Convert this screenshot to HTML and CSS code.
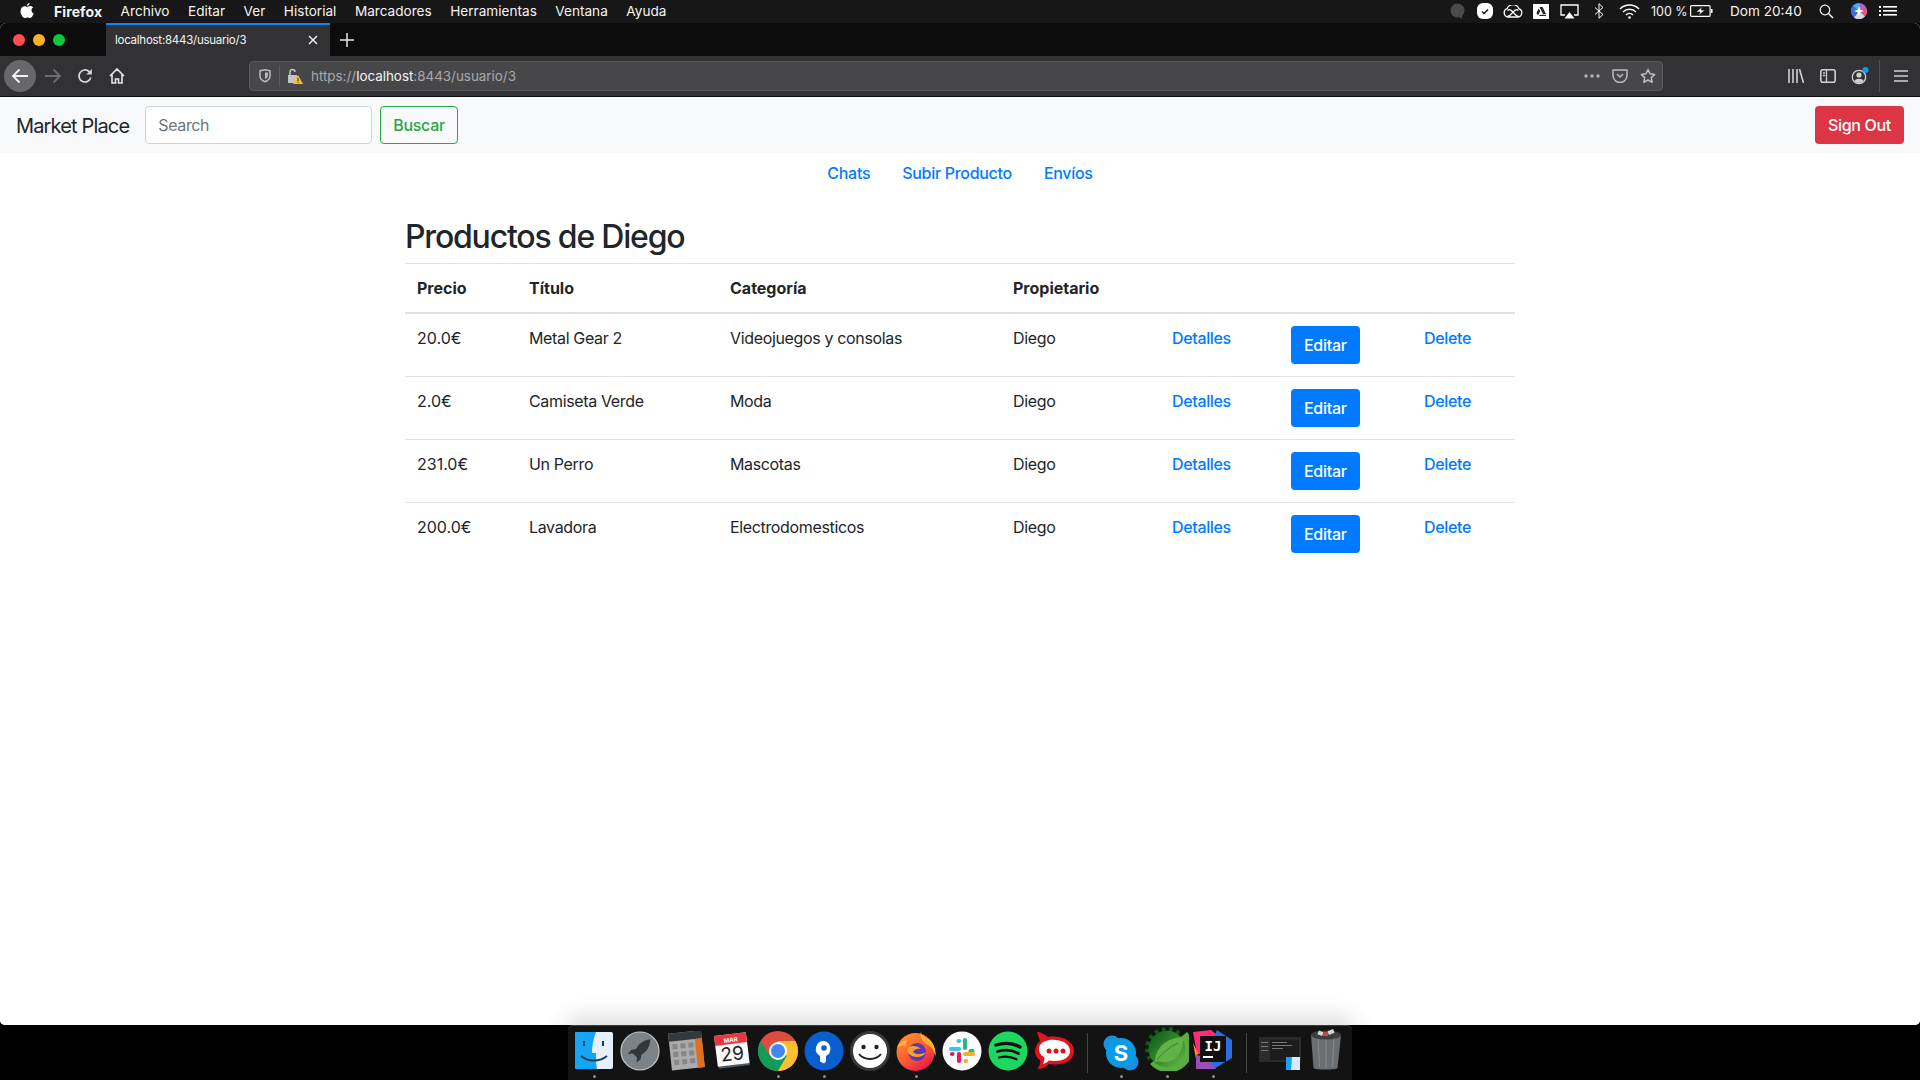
FILE: index.html
```html
<!DOCTYPE html>
<html lang="es">
<head>
<meta charset="utf-8">
<title>Market Place</title>
<link rel="stylesheet" href="styles.css">
</head>
<body>
<header class="menubar">
  <svg class="apple" viewBox="0 0 14 16" width="14" height="16"><path fill="#fff" d="M9.6 0c.1 1.2-1.100 2.900-2.700 2.800C6.700 1.400 8.100.1 9.600 0zM7 3.800c.7 0 1.700-.9 3.100-.9.900 0 2.200.4 3 1.600-2.400 1.400-2 4.900.6 5.900-.6 1.700-2.100 4.600-3.600 4.600-.9 0-1.300-.6-2.500-.6s-1.700.6-2.500.6C3.300 15 .5 11.700.5 8.400c0-3.200 2-5.100 4-5.100 1.100 0 2 .5 2.500.5z"/></svg>
  <nav class="menu">
    <span class="menu-app">Firefox</span>
    <span>Archivo</span><span>Editar</span><span>Ver</span><span>Historial</span><span>Marcadores</span><span>Herramientas</span><span>Ventana</span><span>Ayuda</span>
  </nav>
  <div class="status">
    <span class="si"><svg width="15" height="17" viewBox="0 0 15 17"><circle cx="7.500" cy="7.500" r="7" fill="#4a4a4c"/><path d="M8 13l4 3v-5z" fill="#4a4a4c"/></svg></span>
    <span class="si"><svg width="16" height="16" viewBox="0 0 16 16"><rect x="0" y="0" width="16" height="16" rx="6" fill="#fff"/><path d="M5 8.500l2 2 4-4" fill="none" stroke="#222" stroke-width="1.600"/></svg></span>
    <span class="si"><svg width="20" height="13" viewBox="0 0 20 13"><g fill="none" stroke="#fff" stroke-width="1.300"><path d="M5 12a4.300 4.300 0 0 1-1-8.300 6.500 6.500 0 0 1 12 0 4.300 4.300 0 0 1-1 8.300z"/><path d="M4.500 11.500c4-.5 6-6.800 9-6.800a3 3 0 0 1 2 .8M15.500 11.500c-4-.5-6-6.800-9-6.800a3 3 0 0 0-2 .8"/></g></svg></span>
    <span class="si"><svg width="16" height="15" viewBox="0 0 16 15"><rect width="16" height="15" fill="#fff"/><path d="M6.500 3h3l3.500 7H10zM5.700 4.500L7.200 7.300 5 11.500 3.500 9zM6 12h6.500l1-1.200H7z" fill="#222"/></svg></span>
    <span class="si"><svg width="19" height="15" viewBox="0 0 19 15"><path d="M5 11H1V1h17v10h-4" fill="none" stroke="#fff" stroke-width="1.300"/><path d="M9.500 8l5 6.500h-10z" fill="#fff"/></svg></span>
    <span class="si si-w"><svg width="10" height="16" viewBox="0 0 10 16"><path d="M1 4.500l8 7-4 3.800V.7l4 3.800-8 7" fill="none" stroke="#fff" stroke-width="1"/></svg></span>
    <span class="si si-w"><svg width="21" height="15" viewBox="0 0 21 15"><g fill="none" stroke="#fff" stroke-width="1.500"><path d="M1 5a13.500 13.500 0 0 1 19 0"/><path d="M4 8a9.200 9.200 0 0 1 13 0"/><path d="M7 11a5 5 0 0 1 7 0"/></g><circle cx="10.500" cy="13.500" r="1.300" fill="#fff"/></svg></span>
    <span class="batt-text">100 %</span>
    <svg class="batt" width="23" height="12" viewBox="0 0 23 12"><rect x=".6" y=".6" width="19.500" height="10.800" rx="1" fill="none" stroke="#fff" stroke-width="1.200"/><rect x="21" y="4" width="1.500" height="4" fill="#fff"/><path d="M13 1L6 7h4l-2 4 7-6h-4z" fill="#fff" stroke="#171717" stroke-width=".7"/></svg>
    <span class="clock">Dom 20:40</span>
    <span class="si si-search"><svg width="15" height="15" viewBox="0 0 15 15"><circle cx="6" cy="6" r="4.800" fill="none" stroke="#fff" stroke-width="1.200"/><path d="M9.500 9.500l4.500 4.500" stroke="#fff" stroke-width="1.400"/></svg></span>
    <span class="si si-siri"><svg width="16" height="16" viewBox="0 0 16 16"><circle cx="8" cy="8" r="7.800" fill="#8a8fa8"/><path d="M8 8L2 2.500a8 8 0 0 1 6-2.300z" fill="#38b6e8"/><path d="M8 8V.2a8 8 0 0 1 6.500 3.500z" fill="#c05ad8"/><path d="M8 8l6.500-4.300A8 8 0 0 1 14 13.500z" fill="#e0557c"/><path d="M8 8l6 5.500A8 8 0 0 1 3 14.500z" fill="#d8d8e4"/><path d="M8 8l-5 6.500A8 8 0 0 1 2 2.500z" fill="#3a6fd8"/><path d="M8 3l1.300 3.700 3.700 1.300-3.700 1.300L8 13 6.700 9.300 3 8l3.700-1.300z" fill="#fff"/></svg></span>
    <span class="si"><svg width="18" height="12" viewBox="0 0 18 12"><g fill="#fff"><rect x="0" y="1" width="2" height="2"/><rect x="0" y="5" width="2" height="2"/><rect x="0" y="9" width="2" height="2"/><rect x="4" y="1" width="14" height="1.600"/><rect x="4" y="5" width="14" height="1.600"/><rect x="4" y="9" width="14" height="1.600"/></g></svg></span>
  </div>
</header>

<div class="window">
  <div class="tabstrip">
    <div class="traffic"><i class="dot dot-r"></i><i class="dot dot-y"></i><i class="dot dot-g"></i></div>
    <div class="tab">
      <span class="tab-title">localhost:8443/usuario/3</span>
      <svg width="12" height="12" viewBox="0 0 12 12"><path d="M2 2l8 8M10 2l-8 8" stroke="#f2f2f2" stroke-width="1.400"/></svg>
    </div>
    <svg class="newtab" width="14" height="14" viewBox="0 0 14 14"><path d="M7 0v14M0 7h14" stroke="#e8e8e8" stroke-width="1.500"/></svg>
  </div>

  <div class="toolbar">
    <span class="tb tb-back"><svg width="18" height="16" viewBox="0 0 18 16"><path d="M17 8H2M8.500 1.500L2 8l6.500 6.500" fill="none" stroke="#f2f2f2" stroke-width="1.800"/></svg></span>
    <span class="tb"><svg width="18" height="16" viewBox="0 0 18 16"><path d="M1 8h15M9.500 1.500L16 8l-6.500 6.500" fill="none" stroke="#6e6e70" stroke-width="1.800"/></svg></span>
    <span class="tb"><svg width="16" height="16" viewBox="0 0 16 16"><path d="M13.800 9.500A6 6 0 1 1 12 3.500L14 5.500" fill="none" stroke="#d8d8d8" stroke-width="1.700"/><path d="M14.800 1v5.500H9.300z" fill="#d8d8d8"/></svg></span>
    <span class="tb"><svg width="16" height="16" viewBox="0 0 16 16"><path d="M1 8l7-7 7 7M3 6.500V15h3.500v-4h3v4H13V6.500" fill="none" stroke="#e8e8e8" stroke-width="1.600"/></svg></span>
    <div class="urlbar">
      <svg class="shield" width="12" height="14" viewBox="0 0 12 14"><path d="M1 1.800L6 .8l5 1v5c0 3-2.300 5-5 6-2.700-1-5-3-5-6z" fill="none" stroke="#bdbdbd" stroke-width="1.500"/><path d="M6 3.500h2.800v3.300c0 1.500-1.300 2.700-2.800 3.300z" fill="#bdbdbd"/></svg>
      <i class="url-sep"></i>
      <svg class="lock" width="16" height="16" viewBox="0 0 16 16"><path d="M1 7h9v8H1z" fill="#c4c4c4"/><path d="M3 7V4a2.500 2.500 0 0 1 5 0" fill="none" stroke="#c4c4c4" stroke-width="1.500"/><path d="M11 7l5 9H6z" fill="#fbbf24"/><rect x="10.500" y="10" width="1" height="3" fill="#222"/><rect x="10.500" y="13.700" width="1" height="1" fill="#222"/></svg>
      <span class="url"><span class="url-dim">https://</span>localhost<span class="url-dim">:8443/usuario/3</span></span>
      <span class="url-actions">
        <svg width="16" height="4" viewBox="0 0 16 4"><g fill="#b4b4b4"><circle cx="2" cy="2" r="1.700"/><circle cx="8" cy="2" r="1.700"/><circle cx="14" cy="2" r="1.700"/></g></svg>
        <svg width="16" height="14" viewBox="0 0 16 14"><path d="M1 1h14v5.500a7 7 0 0 1-14 0z" fill="none" stroke="#bdbdbd" stroke-width="1.500"/><path d="M5 5l3 3 3-3" fill="none" stroke="#bdbdbd" stroke-width="1.500"/></svg>
        <svg width="16" height="16" viewBox="0 0 16 16"><path d="M8 1.500l2 4.300 4.700.6-3.400 3.200.9 4.700L8 12l-4.200 2.300.9-4.700L1.300 6.400 6 5.800z" fill="none" stroke="#bdbdbd" stroke-width="1.500" stroke-linejoin="round"/></svg>
      </span>
    </div>
    <div class="tb-right">
      <span class="tb"><svg width="16" height="14" viewBox="0 0 16 14"><path d="M1 0v14M5 0v14M9 0v14M11.500 0L15.500 14" stroke="#d0d0d0" stroke-width="1.600" fill="none"/></svg></span>
      <span class="tb"><svg width="16" height="14" viewBox="0 0 16 14"><rect x=".8" y=".8" width="14.400" height="12.400" rx="2" fill="none" stroke="#d0d0d0" stroke-width="1.600"/><path d="M6.500 1v12M3 4h2M3 6.500h2" stroke="#d0d0d0" stroke-width="1.300"/></svg></span>
      <span class="tb"><svg width="18" height="18" viewBox="0 0 18 18"><circle cx="8" cy="10" r="6.700" fill="none" stroke="#d0d0d0" stroke-width="1.300"/><circle cx="8" cy="8" r="2.600" fill="#d0d0d0"/><path d="M3.500 14c1-3 8-3 9 0a6 6 0 0 1-9 0z" fill="#d0d0d0"/><circle cx="14.500" cy="3" r="3" fill="#0a9ee8"/></svg></span>
      <i class="tb-sep"></i>
      <span class="tb"><svg width="14" height="12" viewBox="0 0 14 12"><path d="M0 1h14M0 6h14M0 11h14" stroke="#d0d0d0" stroke-width="1.600"/></svg></span>
    </div>
  </div>

  <main class="page">
    <div class="navbar">
      <span class="brand">Market Place</span>
      <form class="search">
        <input class="search-input" type="text" placeholder="Search">
        <button class="btn btn-outline" type="button">Buscar</button>
      </form>
      <button class="btn btn-danger" type="button">Sign Out</button>
    </div>
    <nav class="links">
      <a class="link" href="#">Chats</a>
      <a class="link" href="#">Subir Producto</a>
      <a class="link" href="#">Envíos</a>
    </nav>
    <section class="container">
      <h2 class="title">Productos de Diego</h2>
      <table class="table">
        <colgroup>
          <col class="c1"><col class="c2"><col class="c3"><col class="c4"><col class="c5"><col class="c6"><col class="c7">
        </colgroup>
        <thead>
          <tr><th>Precio</th><th>Título</th><th>Categoría</th><th>Propietario</th><th></th><th></th><th></th></tr>
        </thead>
        <tbody>
          <tr><td class="price">20.0€</td><td>Metal Gear 2</td><td>Videojuegos y consolas</td><td>Diego</td><td><a class="cell-link" href="#">Detalles</a></td><td><button class="btn btn-primary" type="button">Editar</button></td><td><a class="cell-link" href="#">Delete</a></td></tr>
          <tr><td class="price">2.0€</td><td>Camiseta Verde</td><td>Moda</td><td>Diego</td><td><a class="cell-link" href="#">Detalles</a></td><td><button class="btn btn-primary" type="button">Editar</button></td><td><a class="cell-link" href="#">Delete</a></td></tr>
          <tr><td class="price">231.0€</td><td>Un Perro</td><td>Mascotas</td><td>Diego</td><td><a class="cell-link" href="#">Detalles</a></td><td><button class="btn btn-primary" type="button">Editar</button></td><td><a class="cell-link" href="#">Delete</a></td></tr>
          <tr><td class="price">200.0€</td><td>Lavadora</td><td>Electrodomesticos</td><td>Diego</td><td><a class="cell-link" href="#">Detalles</a></td><td><button class="btn btn-primary" type="button">Editar</button></td><td><a class="cell-link" href="#">Delete</a></td></tr>
        </tbody>
      </table>
    </section>
  </main>
</div>

<footer class="dockrow">
  <div class="dock">
    <div class="app"><svg width="40" height="40" viewBox="0 0 40 40"><rect x="1" y="1" width="38" height="37" rx="2" fill="#e6f0fa"/><path d="M3 1h19c-3 8-4 14-4 21h4c0 6 0 11 1 16H3a2 2 0 0 1-2-2V3a2 2 0 0 1 2-2z" fill="#15a6f3"/><path d="M10 10v5M29 10v5" stroke="#1c3a5e" stroke-width="2"/><path d="M7 25c7 6 19 6 26 0" fill="none" stroke="#1c3a5e" stroke-width="1.800"/></svg><i class="pip"></i></div>
    <div class="app"><svg width="40" height="40" viewBox="0 0 40 40"><circle cx="20" cy="20" r="19" fill="#7d8286" stroke="#c2c5c7" stroke-width="1.200"/><path d="M31 8c-7 1-12 4-15 10l-5 1-3 4 5-.5 4 4-.5 5 4-3 1-5c6-3 8-8 9-15.500z" fill="#34363a"/></svg><i class="pip pip-off"></i></div>
    <div class="app"><svg width="40" height="40" viewBox="0 0 40 40"><g transform="rotate(-6 20 20)"><rect x="4" y="1" width="33" height="37" fill="#ababab"/><rect x="4" y="1" width="33" height="8" fill="#34393c"/><rect x="30" y="9" width="7" height="29" fill="#e07020"/><g fill="#868686"><rect x="7" y="12" width="5" height="5"/><rect x="15" y="12" width="5" height="5"/><rect x="23" y="12" width="5" height="5"/><rect x="7" y="20" width="5" height="5"/><rect x="15" y="20" width="5" height="5"/><rect x="23" y="20" width="5" height="5"/><rect x="7" y="28" width="5" height="5"/><rect x="15" y="28" width="5" height="5"/><rect x="23" y="28" width="5" height="5"/></g></g></svg><i class="pip pip-off"></i></div>
    <div class="app"><svg width="40" height="40" viewBox="0 0 40 40"><g transform="rotate(-7 20 20)"><rect x="5" y="7" width="31" height="29" fill="#4d5a5e"/><rect x="4" y="3" width="32" height="31" fill="#fafafa"/><rect x="4" y="3" width="32" height="10" fill="#e8383d"/><text x="20" y="11" text-anchor="middle" class="cal-mon">MAR</text><text x="20" y="29.500" text-anchor="middle" class="cal-day">29</text></g></svg><i class="pip pip-off"></i></div>
    <div class="app"><svg width="40" height="40" viewBox="0 0 40 40"><circle cx="20" cy="20" r="20" fill="#dd4c3d"/><path d="M20 40A20 20 0 0 0 37.300 10H20z" fill="#fbc02d"/><path d="M2.700 10A20 20 0 0 0 20 40l9-15.500H11.500z" fill="#0f9d58"/><circle cx="20" cy="20" r="9" fill="#fff"/><circle cx="20" cy="20" r="7" fill="#4285f4"/></svg><i class="pip"></i></div>
    <div class="app"><svg width="40" height="40" viewBox="0 0 40 40"><circle cx="20" cy="20" r="19.500" fill="#0a5fd0"/><path d="M20 10a8 8 0 0 0-4 15v5.500l4 2 2-2V25a8 8 0 0 0-2-15z" fill="#fff"/><circle cx="20" cy="17" r="2.800" fill="#0a5fd0"/></svg><i class="pip"></i></div>
    <div class="app"><svg width="40" height="40" viewBox="0 0 40 40"><circle cx="20" cy="20" r="18.500" fill="#fff" stroke="#38383a" stroke-width="3"/><circle cx="13.500" cy="16" r="2.200" fill="#222"/><circle cx="26.500" cy="16" r="2.200" fill="#222"/><path d="M9 23c5 6.500 17 6.500 22 0" fill="none" stroke="#222" stroke-width="2"/></svg><i class="pip pip-off"></i></div>
    <div class="app"><svg width="40" height="40" viewBox="0 0 40 40"><defs><linearGradient id="ff" x1="0" y1="0" x2=".7" y2="1"><stop offset="0" stop-color="#ff9a2e"/><stop offset=".6" stop-color="#ff5a30"/><stop offset="1" stop-color="#e8184f"/></linearGradient></defs><circle cx="19.500" cy="21" r="19" fill="url(#ff)"/><path d="M25 0c0 5 3 6 7 8 5 3 8 9 7.500 17-1-6-5-10-9-12-4-3-7-7-5.500-13z" fill="#ffc83a"/><path d="M27 3c1 4 5 6 8 9 3 3 4.500 8 4.500 13-2-7-6-11-9-13-3-2-4-5-3.500-9z" fill="#ffa62e"/><path d="M1 17c2-5 6-8 11-8-2 2-3 4-2 6-4-1-7 0-9 2z" fill="#ffb13a"/><circle cx="21" cy="21" r="9" fill="#5a38b8"/><path d="M13 16c4-2 9-1 12 2-4-1-6 0-8 3 3 3 8 3 13 0-3 6-13 7-18 1-1-2-1-4 1-6z" fill="#ff9f2e"/></svg><i class="pip"></i></div>
    <div class="app"><svg width="40" height="40" viewBox="0 0 40 40"><circle cx="20" cy="20" r="19.500" fill="#fff"/><g stroke-width="4.200" stroke-linecap="round"><path d="M23 9v8M28.500 20h2" stroke="#2eb67d"/><path d="M16.500 10h.5M9 18h8" stroke="#36c5f0"/><path d="M17 23v7M10 23h.5" stroke="#e01e5a"/><path d="M23.500 30h.5M23 23h8" stroke="#ecb22e"/></g></svg><i class="pip pip-off"></i></div>
    <div class="app"><svg width="40" height="40" viewBox="0 0 40 40"><circle cx="20" cy="20" r="19.500" fill="#1ed760"/><g fill="none" stroke="#111" stroke-linecap="round"><path d="M8 14c8-2.500 17-2 24 2" stroke-width="3.400"/><path d="M9.500 20.500c7-2 15-1.500 21 2" stroke-width="2.800"/><path d="M11 26.500c6-1.500 12-1 17.500 1.800" stroke-width="2.300"/></g></svg><i class="pip pip-off"></i></div>
    <div class="app"><svg width="42" height="40" viewBox="0 0 42 40"><path d="M4 1c3 0 8 2 11 5 12-2 26 3 26 14 0 11-14 15-25 13-3 3-8 5-12 5 2-2 4-6 3-9C1 26 0 16 7 10 6 7 5 4 4 1z" fill="#e4111f"/><path d="M16 9c9-1.500 21 2 21 11 0 9-12 11-21 9.500-2 2-4 3-6 3.500 1-2 2-5 1-7-6-3-7-11-1-15z" fill="#fff"/><circle cx="16" cy="20" r="2.500" fill="#e4111f"/><circle cx="23" cy="20" r="2.500" fill="#e4111f"/><circle cx="30" cy="20" r="2.500" fill="#e4111f"/></svg><i class="pip pip-off"></i></div>
    <i class="dock-sep"></i>
    <div class="app"><svg width="36" height="36" viewBox="0 0 36 36"><circle cx="9" cy="9" r="8.500" fill="#1a8fdc"/><circle cx="27" cy="27" r="8.500" fill="#1a8fdc"/><circle cx="18" cy="18" r="15" fill="#0a9be8"/><text x="18" y="26" text-anchor="middle" class="sky">S</text></svg><i class="pip"></i></div>
    <div class="app"><svg width="44" height="44" viewBox="0 0 44 44"><defs><linearGradient id="spr" x1="0" y1="0" x2="1" y2="1"><stop offset="0" stop-color="#0c5416"/><stop offset=".5" stop-color="#2f8a2a"/><stop offset="1" stop-color="#6cb84a"/></linearGradient></defs><circle cx="22" cy="22" r="19" fill="none" stroke="#0e5a18" stroke-width="6" stroke-dasharray="3.500 3.500"/><path d="M42 5A21.500 21.500 0 0 1 5 37z" fill="#5aae3f"/><circle cx="22" cy="22" r="18.500" fill="url(#spr)"/><path d="M10 35C10 22 20 11 38 10c1 15-8 27-20 25-3-.5-5 0-8 0z" fill="#62b245"/><path d="M12 33C18 25 25 20 33 16" fill="none" stroke="#2f8a2a" stroke-width="1"/></svg><i class="pip"></i></div>
    <div class="app"><svg width="42" height="42" viewBox="0 0 42 42"><path d="M1 3l18-2 10 8-14 16H5z" fill="#fd2b78"/><path d="M25 1l15 10v18L22 40 12 30z" fill="#2a70e0"/><path d="M1 14l5 10-2 6z" fill="#ff8a2c"/><path d="M4 26l10 2 10 12-20 0z" fill="#9a4fb8"/><rect x="8" y="7" width="26" height="26" fill="#111"/><text x="21" y="22" text-anchor="middle" class="ij">IJ</text><rect x="11" y="27" width="10" height="2" fill="#fff"/></svg><i class="pip"></i></div>
    <i class="dock-sep"></i>
    <div class="app"><svg width="42" height="34" viewBox="0 0 42 34"><rect x="0" y="0" width="42" height="25" fill="#2a2b2c"/><rect x="11" y="3" width="29" height="20" fill="#1c1c1d"/><g fill="#787878"><rect x="13" y="5" width="15" height="1"/><rect x="13" y="8" width="20" height="1"/><rect x="13" y="11" width="11" height="1"/><rect x="2" y="5" width="7" height="1"/><rect x="2" y="9" width="7" height="1"/><rect x="2" y="13" width="7" height="1"/></g><rect x="27" y="20" width="14" height="13" fill="#d8e8f6"/><path d="M27 20h6l-1 13h-5z" fill="#15a6f3"/></svg><i class="pip pip-off"></i></div>
    <div class="app"><svg width="32" height="42" viewBox="0 0 32 42"><path d="M1 6h30l-3.500 33c-.5 2-23 2-24 0z" fill="#6b6e70"/><path d="M8 8l1.500 30M16 8v31M24 8l-1.500 30" stroke="#898c8e" stroke-width="1"/><ellipse cx="16" cy="6" rx="15" ry="4.500" fill="#3b3d3f"/><g fill="#d6d6d6"><rect x="8" y="2" width="5" height="4" transform="rotate(20 10 4)"/><rect x="18" y="1" width="6" height="4" transform="rotate(-20 21 3)"/></g><rect x="13" y="3" width="5" height="4" fill="#c04a4a"/></svg><i class="pip pip-off"></i></div>
  </div>
</footer>
</body>
</html>
```

FILE: styles.css
```css
* { box-sizing: border-box; }
html, body { margin: 0; height: 100%; }
body {
  width: 1920px;
  height: 1080px;
  display: flex;
  flex-direction: column;
  overflow: hidden;
  background: #000;
  font-family: Inter, "Liberation Sans", sans-serif;
  font-size: 16px;
  color: #212529;
}

/* mac menu bar */
.menubar {
  height: 23px;
  flex: none;
  display: flex;
  align-items: center;
  padding-bottom: 1px;
  background: #171717;
  color: #f4f4f4;
  font-size: 13.600px;
}
.apple { margin-left: 20px; margin-right: 20px; }
.menu { display: flex; gap: 18.500px; }
.menu-app { font-weight: 700; font-size: 14px; letter-spacing: .1px; }
.status { margin-left: auto; display: flex; align-items: center; padding-right: 18px; }
.si { width: 28px; display: flex; justify-content: center; align-items: center; }
.si-w { width: 31px; }
.si-search { margin-right: 5px; }
.si-siri { margin-right: 1px; }
.batt-text { margin-left: 6px; width: 34px; font-size: 12.500px; white-space: nowrap; }
.batt { margin-left: 5px; }
.clock { margin-left: 17px; width: 72px; margin-right: 10px; white-space: nowrap; }

/* browser chrome */
.window {
  height: 1002px;
  flex: none;
  display: flex;
  flex-direction: column;
  background: #fff;
  border-radius: 6px 6px 5px 5px;
  overflow: hidden;
}
.tabstrip {
  height: 33px;
  flex: none;
  display: flex;
  align-items: center;
  background: #0c0c0d;
}
.traffic { width: 106px; display: flex; gap: 8px; padding-left: 13px; }
.dot { width: 12px; height: 12px; border-radius: 50%; }
.dot-r { background: #fd4f4c; }
.dot-y { background: #fdb024; }
.dot-g { background: #0ec63f; }
.tab {
  width: 224px;
  height: 33px;
  display: flex;
  align-items: center;
  justify-content: space-between;
  padding: 0 11px 1px 9px;
  background: #323234;
  border-top: 2px solid #0a84ff;
  color: #f5f5f5;
  font-size: 11.500px;
  letter-spacing: -.25px;
}
.newtab { margin-left: 10px; }
.toolbar {
  height: 41px;
  flex: none;
  display: flex;
  align-items: center;
  padding: 0 3px 1px 4px;
  background: #323234;
  border-bottom: 1px solid #0c0c0d;
}
.tb { width: 32px; height: 32px; flex: none; display: flex; align-items: center; justify-content: center; }
.tb-back { background: #68686a; border-radius: 50%; margin-right: 1px; }
.urlbar {
  flex: 1;
  height: 30px;
  margin-left: 116px;
  display: flex;
  align-items: center;
  padding: 0 6px 0 9px;
  background: #474749;
  border: 1px solid #59595b;
  border-radius: 4px;
  color: #f5f5f5;
  font-size: 13.400px;
}
.url-sep { width: 1px; height: 22px; margin: 0 7px 0 8px; background: #5e5e60; }
.lock { flex: none; }
.url { margin-left: 8px; }
.url-dim { color: #aaaaac; }
.url-actions { margin-left: auto; display: flex; align-items: center; gap: 12px; }
.tb-right { display: flex; align-items: center; margin-left: 117px; }
.tb-sep { width: 1px; height: 32px; margin: 0 5px 0 3px; background: #505052; }

/* page */
.page { flex: 1; background: #fff; }
.navbar {
  height: 56px;
  display: flex;
  align-items: center;
  padding: 0 16px;
  background: #f8f9fa;
}
.brand { font-size: 20px; line-height: 30px; padding-top: 2px; margin-right: 16px; color: #212529; letter-spacing: -.85px; white-space: nowrap; }
.search { display: flex; gap: 8px; }
.search-input {
  width: 227px;
  height: 38px;
  padding: 6px 12px;
  border: 1px solid #ced4da;
  border-radius: 4px;
  background: #fff;
  font: inherit;
  letter-spacing: -.35px;
}
.search-input::placeholder { color: #6c757d; }
.btn {
  height: 38px;
  padding: 0 12px;
  border: 1px solid transparent;
  border-radius: 4px;
  font: 500 16px Inter, "Liberation Sans", sans-serif;
  letter-spacing: -.3px;
  background: transparent;
}
.btn-outline { color: #28a745; border-color: #28a745; }
.btn-danger { margin-left: auto; color: #fff; background: #dc3545; }
.btn-primary { color: #fff; background: #007bff; vertical-align: top; }
.links { height: 40px; display: flex; justify-content: center; }
.link { padding: 8px 16px; color: #007bff; text-decoration: none; font-weight: 500; line-height: 24px; letter-spacing: -.3px; }
.container { width: 1110px; margin: 25px auto 0; }
.title { margin: 0 0 7px; font-size: 32px; line-height: 38.400px; font-weight: 500; letter-spacing: -1.200px; }
.table { width: 1110px; table-layout: fixed; border-collapse: collapse; }
.c1 { width: 112px; }
.c2 { width: 201px; }
.c3 { width: 283px; }
.c4 { width: 159px; }
.c5 { width: 119px; }
.c6 { width: 133px; }
.c7 { width: 103px; }
.table th, .table td { padding: 12px; line-height: 24px; text-align: left; vertical-align: top; border-top: 1px solid #dee2e6; }
.table th { font-weight: 700; border-bottom: 2px solid #dee2e6; }
.table td { letter-spacing: -.35px; }
.table .price { letter-spacing: 0; }
.cell-link { color: #007bff; text-decoration: none; font-weight: 500; }

/* dock */
.dockrow { flex: 1; display: flex; justify-content: center; background: #000; }
.dock {
  width: 784px;
  height: 55px;
  display: flex;
  padding: 0 3px;
  background: #131313;
  border-top: 1px solid #3c3c3c;
  border-radius: 5px 5px 0 0;
  box-shadow: 0 -6px 24px rgba(0, 0, 0, .16);
}
.app { width: 46px; height: 54px; flex: none; display: flex; flex-direction: column; align-items: center; justify-content: flex-end; padding-bottom: 2px; gap: 4px; }
.app svg { flex: none; }
.pip { width: 3px; height: 3px; border-radius: 50%; background: #8e8e8e; flex: none; }
.pip-off { background: transparent; }
.dock-sep { width: 1px; height: 40px; margin: 7px 10px 0; background: #454545; }
.cal-mon { font: 700 6px Inter, sans-serif; fill: #fff; }
.cal-day { font: 400 19px Inter, sans-serif; fill: #222; }
.sky { font: 700 22px Inter, sans-serif; fill: #fff; }
.ij { font: 700 14px "DejaVu Sans Mono", monospace; fill: #fff; }
```
